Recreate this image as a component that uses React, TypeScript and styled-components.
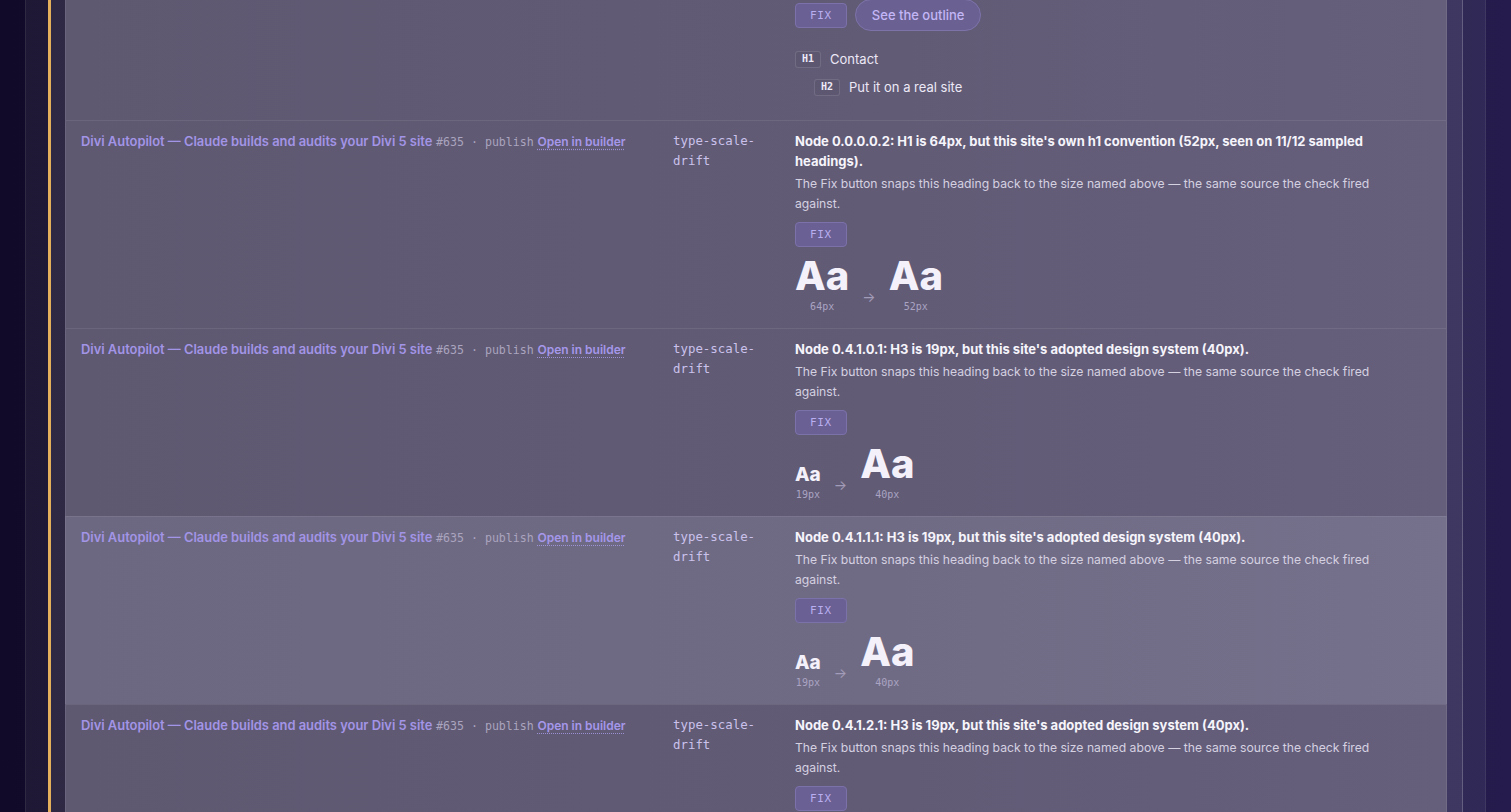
import React from 'react';
import styled, { createGlobalStyle } from 'styled-components';

const GlobalStyle = createGlobalStyle`
  html, body {
    margin: 0;
    height: 100%;
  }
  body {
    background: linear-gradient(90deg, #120a29 0%, #1a1136 45%, #251c4d 100%);
    font-family: Inter, "Noto Sans", sans-serif;
    -webkit-font-smoothing: antialiased;
    overflow: hidden;
  }
`;

const mono = `"DejaVu Sans Mono", "Liberation Mono", monospace`;

const Page = styled.div`
  height: 812px;
  padding: 0 25px;
  overflow: hidden;
`;

const Shell = styled.section`
  height: 100%;
  padding: 0 22px;
  background: rgba(255, 255, 255, 0.06);
  border-left: 1px solid rgba(255, 255, 255, 0.07);
  border-right: 1px solid rgba(255, 255, 255, 0.07);
`;

const Card = styled.div`
  height: 100%;
  padding: 0 15px 0 14px;
  background: rgba(255, 255, 255, 0.07);
  border-left: 3px solid #e5b05c;
  border-right: 1px solid rgba(255, 255, 255, 0.2);
`;

const Table = styled.div`
  display: flex;
  flex-direction: column;
`;

const Row = styled.div<{ $active?: boolean; $first?: boolean }>`
  display: grid;
  grid-template-columns: 592px 122px 1fr;
  background: ${(p) =>
    p.$active
      ? 'linear-gradient(90deg, #6d6881 0%, #706b85 60%, #75708b 100%)'
      : 'linear-gradient(90deg, #5e5871 0%, #615b76 60%, #655f7c 100%)'};
  border-top: ${(p) => (p.$first ? 'none' : '1px solid rgba(255, 255, 255, 0.08)')};
  box-shadow: inset 1px 0 rgba(255, 255, 255, 0.08), inset -1px 0 rgba(255, 255, 255, 0.08);
`;

const Cell = styled.div<{ $top?: boolean }>`
  padding: ${(p) => (p.$top ? '0 16px 16px' : '10px 16px 14px')};
  min-width: 0;
  font-size: 13px;
  line-height: 20px;
`;

const SourceTitle = styled.span`
  color: #a294e6;
  font-weight: 600;
  font-size: 12.9px;
`;

const Meta = styled.span`
  font-family: ${mono};
  font-size: 11.6px;
  color: #aaa4be;
`;

const BuilderLink = styled.a`
  color: #a597ea;
  font-size: 12px;
  font-weight: 600;
  text-decoration: underline dotted rgba(170, 156, 236, 0.8);
  text-underline-offset: 3px;
  cursor: pointer;
`;

const CheckName = styled.div`
  font-family: ${mono};
  font-size: 12.4px;
  line-height: 20px;
  color: #cbc2ec;
`;

const Message = styled.div`
  color: #f6f4fb;
  font-weight: 700;
  line-height: 20px;
`;

const Description = styled.div`
  max-width: 600px;
  margin-top: 3px;
  color: #d5d1e1;
  font-size: 12.2px;
  line-height: 19.5px;
`;

const Actions = styled.div<{ $top?: boolean }>`
  display: flex;
  align-items: center;
  gap: 8px;
  margin-top: ${(p) => (p.$top ? '-1px' : '9px')};
`;

const FixButton = styled.button`
  height: 25px;
  padding: 0 14px;
  border: 1px solid #7c72aa;
  border-radius: 4px;
  background: #6a6094;
  color: #b9aef0;
  font-family: ${mono};
  font-size: 11px;
  letter-spacing: 0.06em;
  cursor: pointer;
`;

const PillButton = styled.button`
  height: 32px;
  padding: 0 16px;
  border: 1px solid #7d73a9;
  border-radius: 16px;
  background: #6a6192;
  color: #c3b6f6;
  font-family: Inter, "Noto Sans", sans-serif;
  font-size: 13px;
  font-weight: 500;
  cursor: pointer;
`;

const Outline = styled.ul`
  list-style: none;
  margin: 18px 0 7px;
  padding: 0;
  display: flex;
  flex-direction: column;
  gap: 8px;
`;

const OutlineItem = styled.li<{ $depth: number }>`
  display: flex;
  align-items: center;
  gap: 9px;
  height: 20px;
  padding-left: ${(p) => p.$depth * 19}px;
  color: #ece8f5;
`;

const LevelTag = styled.span`
  display: inline-flex;
  align-items: center;
  height: 15px;
  padding: 0 6px;
  border: 1px solid rgba(255, 255, 255, 0.12);
  border-radius: 3px;
  background: rgba(0, 0, 0, 0.04);
  font-family: ${mono};
  font-size: 10px;
  font-weight: 700;
  color: #eeeaf8;
`;

const Samples = styled.div`
  display: flex;
  align-items: flex-end;
  gap: 13px;
  margin-top: 9px;
`;

const Sample = styled.div`
  display: flex;
  flex-direction: column;
  align-items: center;
`;

const Glyph = styled.span<{ $size: number }>`
  font-size: ${(p) => p.$size}px;
  line-height: 1;
  font-weight: 800;
  color: #f4f1fb;
`;

const SizeLabel = styled.span`
  margin-top: 4px;
  font-family: ${mono};
  font-size: 10px;
  line-height: 14px;
  color: #aaa4c2;
`;

const Arrow = styled.span`
  margin-bottom: 10px;
  font-size: 14px;
  line-height: 14px;
  color: #a29cb8;
`;

type Finding = {
  node: string;
  level: string;
  from: number;
  to: number;
  rule: string;
  active?: boolean;
};

const desc =
  'The Fix button snaps this heading back to the size named above — the same source the check fired against.';

const findings: Finding[] = [
  {
    node: '0.0.0.0.2',
    level: 'H1',
    from: 64,
    to: 52,
    rule: "this site's own h1 convention (52px, seen on 11/12 sampled headings).",
  },
  { node: '0.4.1.0.1', level: 'H3', from: 19, to: 40, rule: "this site's adopted design system (40px)." },
  { node: '0.4.1.1.1', level: 'H3', from: 19, to: 40, rule: "this site's adopted design system (40px).", active: true },
  { node: '0.4.1.2.1', level: 'H3', from: 19, to: 40, rule: "this site's adopted design system (40px)." },
];

function Source() {
  return (
    <>
      <SourceTitle>Divi Autopilot — Claude builds and audits your Divi 5 site</SourceTitle>{' '}
      <Meta>#635 · publish</Meta> <BuilderLink>Open in builder</BuilderLink>
    </>
  );
}

function SizeSample({ px }: { px: number }) {
  return (
    <Sample>
      <Glyph $size={Math.min(px, 40)}>Aa</Glyph>
      <SizeLabel>{px}px</SizeLabel>
    </Sample>
  );
}

function FindingRow({ f }: { f: Finding }) {
  return (
    <Row $active={f.active}>
      <Cell>
        <Source />
      </Cell>
      <Cell>
        <CheckName>type-scale-drift</CheckName>
      </Cell>
      <Cell>
        <Message>
          Node {f.node}: {f.level} is {f.from}px, but {f.rule}
        </Message>
        <Description>{desc}</Description>
        <Actions>
          <FixButton>FIX</FixButton>
        </Actions>
        <Samples>
          <SizeSample px={f.from} />
          <Arrow>→</Arrow>
          <SizeSample px={f.to} />
        </Samples>
      </Cell>
    </Row>
  );
}

export default function App() {
  return (
    <>
      <GlobalStyle />
      <Page>
        <Shell>
          <Card>
            <Table>
              <Row $first>
                <Cell $top />
                <Cell $top />
                <Cell $top>
                  <Actions $top>
                    <FixButton>FIX</FixButton>
                    <PillButton>See the outline</PillButton>
                  </Actions>
                  <Outline>
                    <OutlineItem $depth={0}>
                      <LevelTag>H1</LevelTag>
                      Contact
                    </OutlineItem>
                    <OutlineItem $depth={1}>
                      <LevelTag>H2</LevelTag>
                      Put it on a real site
                    </OutlineItem>
                  </Outline>
                </Cell>
              </Row>
              {findings.map((f) => (
                <FindingRow key={f.node} f={f} />
              ))}
            </Table>
          </Card>
        </Shell>
      </Page>
    </>
  );
}
